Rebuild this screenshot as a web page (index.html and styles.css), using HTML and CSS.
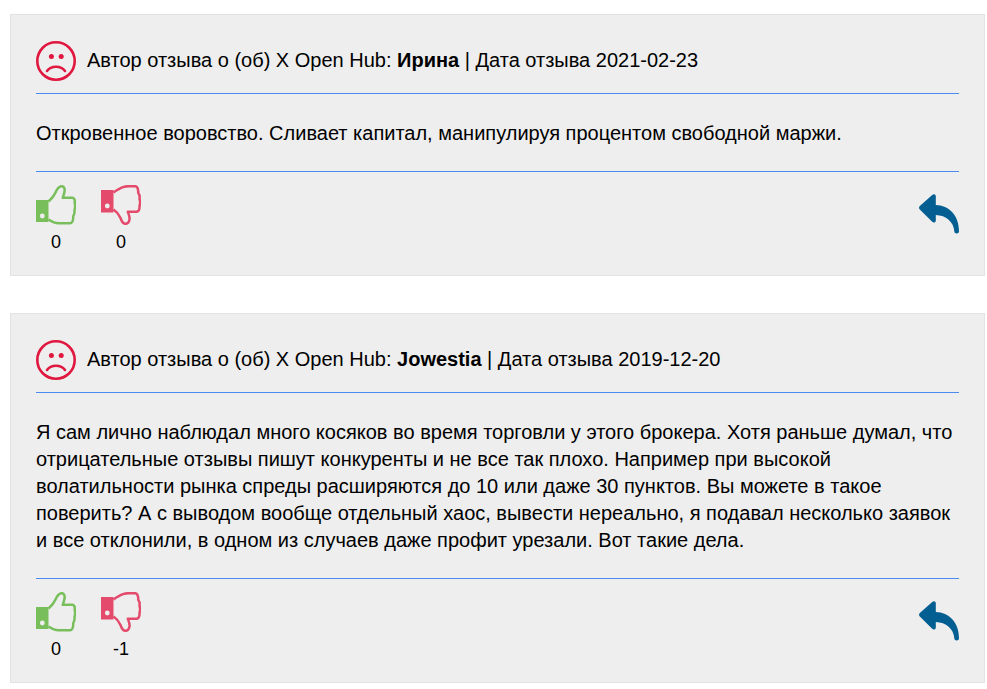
FILE: index.html
```html
<!DOCTYPE html>
<html lang="ru">
<head>
<meta charset="utf-8">
<title>Отзывы о X Open Hub</title>
<link rel="stylesheet" href="styles.css">
</head>
<body>
<svg class="defs" width="0" height="0" aria-hidden="true">
  <defs>
    <symbol id="sad" viewBox="0 0 40 40">
      <circle cx="20" cy="20" r="18.700" fill="none" stroke="#e0173f" stroke-width="2.600"/>
      <circle cx="15.400" cy="15.400" r="2.500" fill="#e0173f"/>
      <circle cx="25.200" cy="15.400" r="2.500" fill="#e0173f"/>
      <path d="M11 30C15 24.300 25 24.300 29 30" fill="none" stroke="#e0173f" stroke-width="2.600" stroke-linecap="round"/>
    </symbol>
    <symbol id="up" viewBox="0 0 40 40">
      <path d="M0 15H12.500V37H0Z" fill="#78bf5c"/>
      <circle cx="6.300" cy="31" r="2.400" fill="#eee"/>
      <path d="M12.500 16.500C15.500 14 18 11 19.500 7.500C21 4 23 1.200 25.700 1.200C28.300 1.200 29 4 28.500 6.500C28.200 8.500 27.500 10.500 26.800 12.800H36.500C38.500 13 39 15.500 38.700 18C39.300 20.500 39.200 23 38.500 25C38.700 27.500 38.300 29.500 37.300 31C37.300 34.500 36.500 38.300 34 38.300H22.500C18.500 38.300 15.500 36.500 12.500 34.500" fill="none" stroke="#78bf5c" stroke-width="2.500" stroke-linejoin="round"/>
    </symbol>
    <symbol id="down" viewBox="0 0 40 40">
      <path d="M0 5H12.500V27.500H0Z" fill="#e44a6b"/>
      <circle cx="6.300" cy="21" r="2.400" fill="#eee"/>
      <path d="M12.500 7.500C15.500 5.500 18.500 3.500 22 2.200C24 1.500 26 1.200 28 1.200H34C36.500 1.200 37.300 4 37.300 8C38.500 9.500 38.900 11.500 38.500 14C39.300 16 39.300 18.500 38.500 21C38.700 24 37.500 26.500 35.500 26.800H26.800C27.800 29.500 29 32 28.500 34.500C28 37 26.500 38.800 24.500 38.800C22 38.800 20.500 36 19.500 33C18 29.500 15.500 26.500 12.500 24.500" fill="none" stroke="#e44a6b" stroke-width="2.500" stroke-linejoin="round"/>
    </symbol>
    <symbol id="reply" viewBox="0 0 40 40">
      <path d="M13.200 1C14.800 -.4 16.800 .3 16.800 2.300V11C30 11.500 40 21 40 37.300C40 40.200 35.400 40.200 35.300 37.300C34.800 28 27 21.300 16.800 21V26.500C16.800 28.500 14.800 29.300 13.200 27.800L.8 15.500C-.2 14.300 -.2 13 .8 12Z" fill="#035f92"/>
    </symbol>
  </defs>
</svg>

<article class="review">
  <header class="review-head">
    <svg class="icon"><use href="#sad"/></svg>
    <p class="review-meta">Автор отзыва о (об) X Open Hub: <b>Ирина</b> | Дата отзыва 2021-02-23</p>
  </header>
  <div class="review-body">
    <p>Откровенное воровство. Сливает капитал, манипулируя процентом свободной маржи.</p>
  </div>
  <footer class="review-foot">
    <div class="votes">
      <div class="vote"><svg class="icon"><use href="#up"/></svg><span class="count">0</span></div>
      <div class="vote"><svg class="icon"><use href="#down"/></svg><span class="count">0</span></div>
    </div>
    <svg class="icon reply"><use href="#reply"/></svg>
  </footer>
</article>

<article class="review">
  <header class="review-head">
    <svg class="icon"><use href="#sad"/></svg>
    <p class="review-meta">Автор отзыва о (об) X Open Hub: <b>Jowestia</b> | Дата отзыва 2019-12-20</p>
  </header>
  <div class="review-body">
    <p>Я сам лично наблюдал много косяков во время торговли у этого брокера. Хотя раньше думал, что отрицательные отзывы пишут конкуренты и не все так плохо. Например при высокой волатильности рынка спреды расширяются до 10 или даже 30 пунктов. Вы можете в такое поверить? А с выводом вообще отдельный хаос, вывести нереально, я подавал несколько заявок и все отклонили, в одном из случаев даже профит урезали. Вот такие дела.</p>
  </div>
  <footer class="review-foot">
    <div class="votes">
      <div class="vote"><svg class="icon"><use href="#up"/></svg><span class="count">0</span></div>
      <div class="vote"><svg class="icon"><use href="#down"/></svg><span class="count">-1</span></div>
    </div>
    <svg class="icon reply"><use href="#reply"/></svg>
  </footer>
</article>
</body>
</html>
```
FILE: styles.css
```css
* {
  box-sizing: border-box;
}

html {
  background: #fff;
}

body {
  margin: 0;
  padding: 14px 2px 0 10px;
  font-family: "Liberation Sans", Arial, sans-serif;
  font-size: 20px;
  line-height: 27px;
  color: #000;
}

.defs {
  display: block;
  height: 0;
}

.review {
  background: #eee;
  border: 1px solid #e2e2e2;
  padding: 26px 25px 0;
}

.review + .review {
  margin-top: 37px;
}

.icon {
  display: block;
  width: 40px;
  height: 40px;
  flex: none;
}

.review-head {
  display: flex;
  align-items: center;
  gap: 11px;
  padding-bottom: 12px;
  border-bottom: 1px solid #4d8af0;
}

.review-meta {
  margin: 0 0 2px;
}

.review-body {
  padding: 26px 0 24px;
  border-bottom: 1px solid #4d8af0;
}

.review-body p {
  margin: 0;
}

.review-foot {
  display: flex;
  justify-content: space-between;
  padding: 13px 0 19px;
}

.votes {
  display: flex;
  gap: 25px;
}

.vote {
  display: flex;
  flex-direction: column;
  align-items: center;
  width: 40px;
}

.count {
  margin-top: 4px;
  font-size: 18px;
  line-height: 27px;
}

.reply {
  margin-top: 9px;
}
```
